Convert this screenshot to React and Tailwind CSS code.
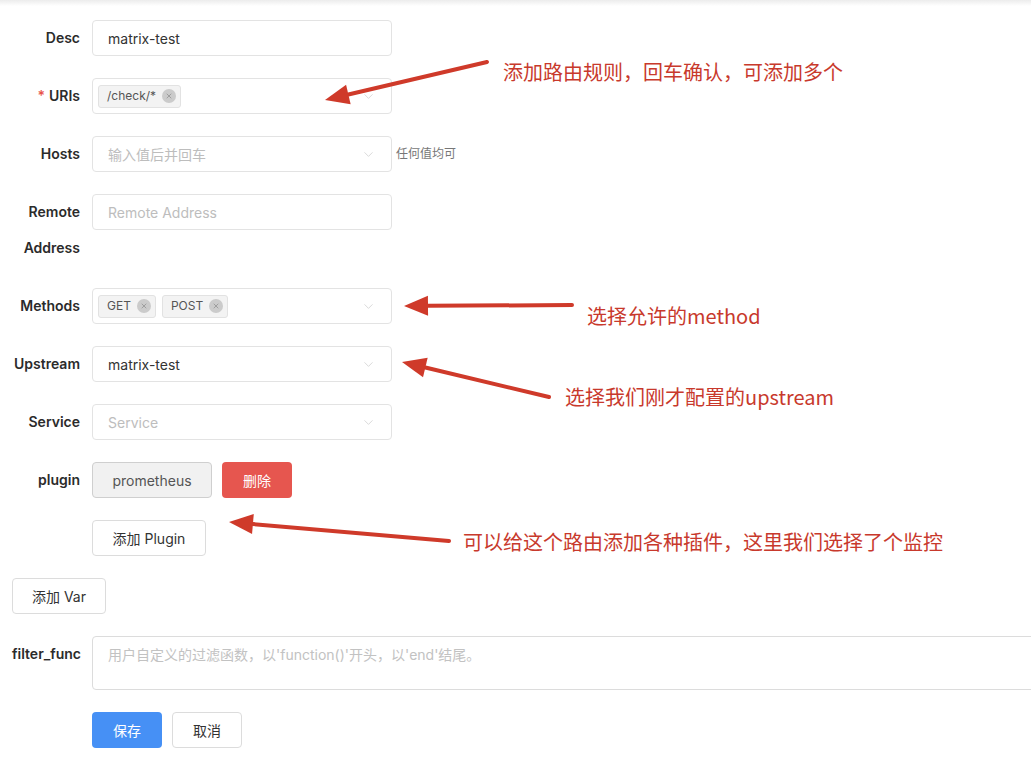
import React from 'react';
import { ChevronDown, X } from 'lucide-react';

const font = { fontFamily: '"Inter", "Noto Sans CJK SC", sans-serif' };

const Label = ({ children, required }) => (
  <div className="w-[68px] shrink-0 text-right text-[14px] font-semibold leading-[36px] text-[#2b2b2b]">
    {required && <span className="mr-1 text-[#e8534b]">*</span>}
    {children}
  </div>
);

const Tag = ({ text }) => (
  <span className="flex h-[23px] items-center gap-[6px] rounded-[3px] border border-[#e2e2e2] bg-[#f3f3f3] pl-[8px] pr-[4px] text-[12px] text-[#555]">
    {text}
    <span className="flex h-[14px] w-[14px] items-center justify-center rounded-full bg-[#cbcbcb]">
      <X size={8} strokeWidth={2} className="text-[#888]" />
    </span>
  </span>
);

const Box = ({ children, chevron }) => (
  <div className="flex h-[36px] w-[300px] items-center rounded-[4px] border border-[#e3e3e3] bg-white px-[15px] text-[14px] text-[#333]">
    <div className="flex flex-1 items-center gap-[6px]">{children}</div>
    {chevron && <ChevronDown size={15} strokeWidth={1} className="text-[#c4c4c4]" />}
  </div>
);

const Row = ({ label, required, children }) => (
  <div className="flex items-start gap-[12px]">
    <Label required={required}>{label}</Label>
    {children}
  </div>
);

const Arrow = ({ x1, y1, x2, y2 }) => {
  const a = Math.atan2(y2 - y1, x2 - x1);
  const len = 24;
  const w = 10;
  const bx = x2 - Math.cos(a) * len;
  const by = y2 - Math.sin(a) * len;
  const px = -Math.sin(a) * w;
  const py = Math.cos(a) * w;
  return (
    <g>
      <line x1={x1} y1={y1} x2={bx} y2={by} stroke="#cf3a2a" strokeWidth="4" strokeLinecap="round" />
      <polygon points={`${x2},${y2} ${bx + px},${by + py} ${bx - px},${by - py}`} fill="#cf3a2a" />
    </g>
  );
};

const Note = ({ className, children }) => (
  <div
    className={`absolute whitespace-nowrap text-[20px] leading-[30px] text-[#c8392c] ${className}`}
    style={{ fontFamily: '"Noto Sans CJK SC", sans-serif' }}
  >
    {children}
  </div>
);

export default function App() {
  return (
    <div className="relative h-[764px] w-[1031px] overflow-hidden bg-white" style={font}>
      <div className="h-[6px] w-full bg-gradient-to-b from-[#ececec] to-white" />
      <div className="flex flex-col gap-[22px] px-[12px] pt-[14px]">
        <Row label="Desc">
          <Box>matrix-test</Box>
        </Row>
        <Row label="URIs" required>
          <div className="flex h-[36px] w-[300px] items-center rounded-[4px] border border-[#e3e3e3] bg-white pl-[5px] pr-[15px]">
            <div className="flex flex-1 items-center"><Tag text="/check/*" /></div>
            <ChevronDown size={15} strokeWidth={1} className="text-[#c4c4c4]" />
          </div>
        </Row>
        <Row label="Hosts">
          <Box chevron><span className="text-[#bdbdbd]">输入值后并回车</span></Box>
          <span className="-ml-[8px] text-[12px] leading-[36px] text-[#777]">任何值均可</span>
        </Row>
        <Row label={<span>Remote<br />Address</span>}>
          <Box><span className="text-[#bdbdbd]">Remote Address</span></Box>
        </Row>
        <Row label="Methods">
          <div className="flex h-[36px] w-[300px] items-center rounded-[4px] border border-[#e3e3e3] bg-white pl-[5px] pr-[15px]">
            <div className="flex flex-1 items-center gap-[6px]">
              <Tag text="GET" />
              <Tag text="POST" />
            </div>
            <ChevronDown size={15} strokeWidth={1} className="text-[#c4c4c4]" />
          </div>
        </Row>
        <Row label="Upstream">
          <Box chevron>matrix-test</Box>
        </Row>
        <Row label="Service">
          <Box chevron><span className="text-[#bdbdbd]">Service</span></Box>
        </Row>
        <Row label="plugin">
          <div className="flex gap-[10px]">
            <button className="h-[36px] w-[120px] rounded-[4px] border border-[#cfcfcf] bg-[#f1f1f1] text-[14px] text-[#555]">prometheus</button>
            <button className="h-[36px] w-[70px] rounded-[4px] bg-[#e6564f] text-[14px] text-white">删除</button>
          </div>
        </Row>
        <div className="pl-[80px]">
          <button className="h-[36px] w-[114px] rounded-[4px] border border-[#dcdcdc] bg-white text-[14px] text-[#333]">添加 Plugin</button>
        </div>
        <div>
          <button className="h-[36px] w-[94px] rounded-[4px] border border-[#dcdcdc] bg-white text-[14px] text-[#333]">添加 Var</button>
        </div>
        <Row label="filter_func">
          <div className="h-[54px] w-[1100px] shrink-0 rounded-[4px] border border-[#dcdcdc] bg-white px-[15px] pt-[7px] text-[14px] text-[#c2c2c2]">
            用户自定义的过滤函数，以'function()'开头，以'end'结尾。
          </div>
        </Row>
        <div className="flex gap-[10px] pl-[80px]">
          <button className="h-[36px] w-[70px] rounded-[4px] bg-[#4690f5] text-[14px] text-white">保存</button>
          <button className="h-[36px] w-[70px] rounded-[4px] border border-[#dcdcdc] bg-white text-[14px] text-[#333]">取消</button>
        </div>
      </div>

      <svg className="pointer-events-none absolute left-0 top-0" width="1031" height="764">
        <Arrow x1={487} y1={62} x2={325} y2={100} />
        <Arrow x1={572} y1={305} x2={404} y2={306} />
        <Arrow x1={549} y1={397} x2={402} y2={362} />
        <Arrow x1={449} y1={541} x2={229} y2={522} />
      </svg>
      <Note className="left-[503px] top-[57px]">添加路由规则，回车确认，可添加多个</Note>
      <Note className="left-[587px] top-[301px]">选择允许的method</Note>
      <Note className="left-[565px] top-[382px]">选择我们刚才配置的upstream</Note>
      <Note className="left-[463px] top-[527px]">可以给这个路由添加各种插件，这里我们选择了个监控</Note>
    </div>
  );
}
